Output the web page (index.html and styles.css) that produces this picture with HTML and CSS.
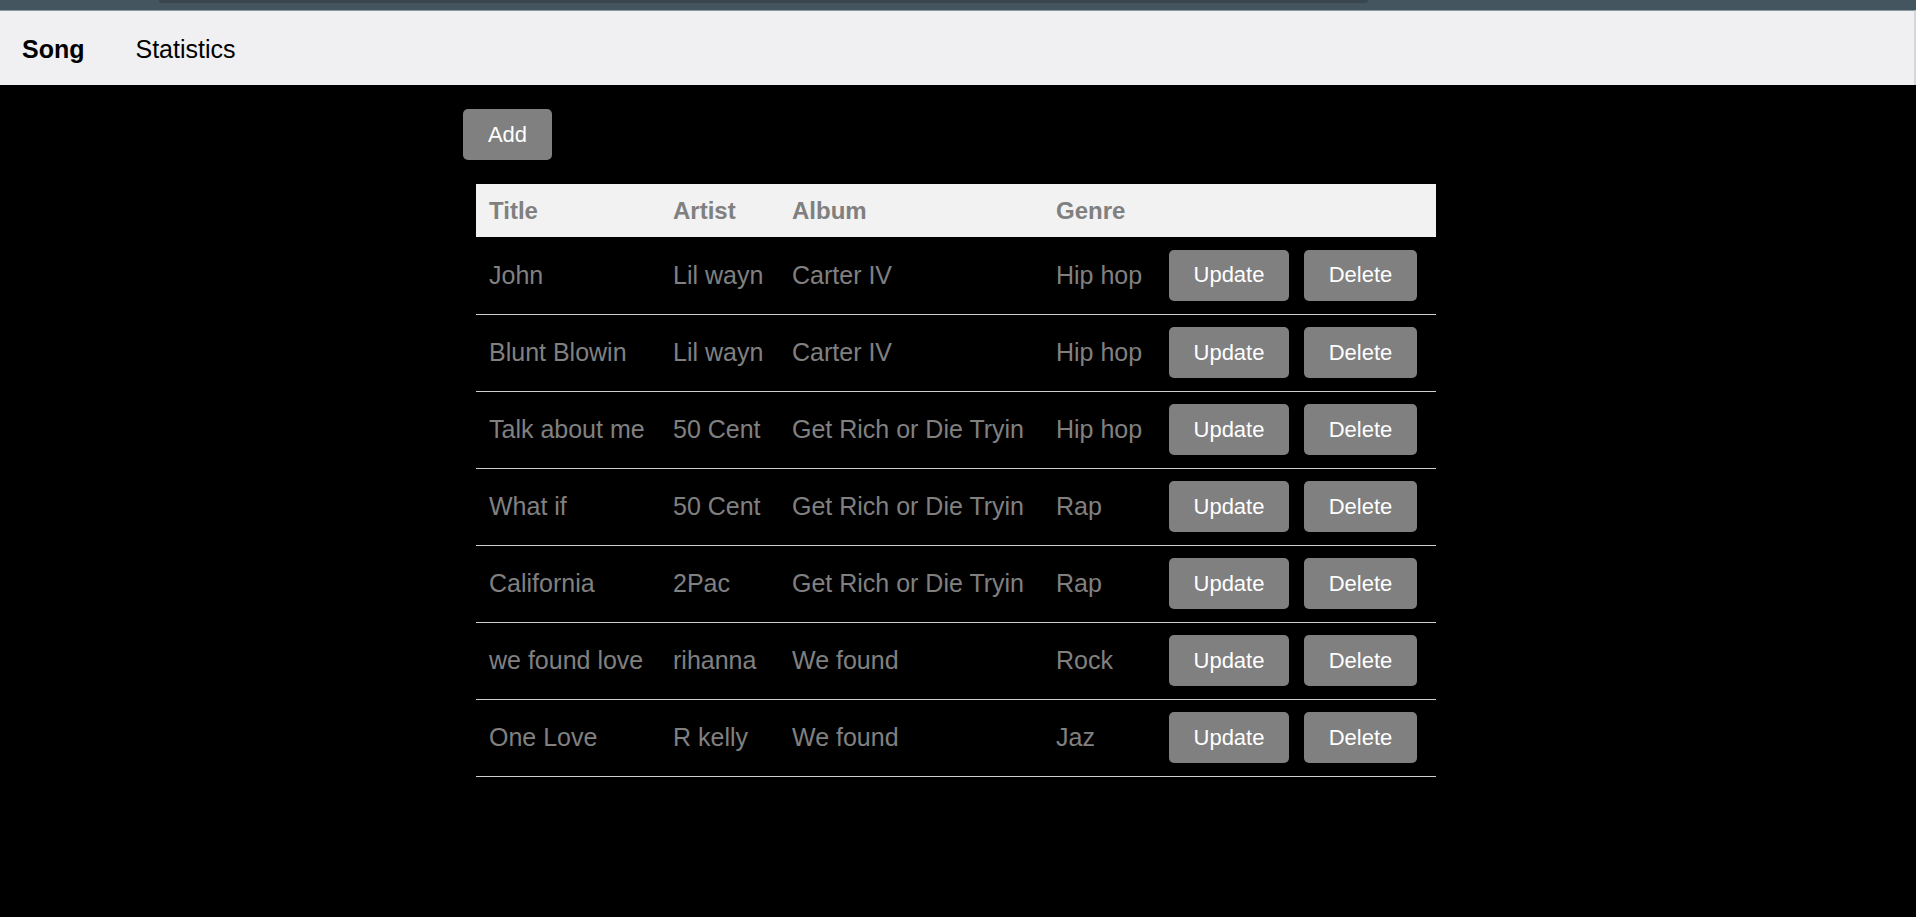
FILE: index.html
```html
<!DOCTYPE html>
<html lang="en">
<head>
<meta charset="utf-8">
<title>Songs</title>
<link rel="stylesheet" href="styles.css">
</head>
<body>
<div class="topstrip"><div class="tab-edge"></div></div>
<nav class="navbar">
  <a class="nav-link active">Song</a>
  <a class="nav-link">Statistics</a>
</nav>
<main class="content">
  <div class="toolbar"><button class="btn">Add</button></div>
  <table class="songs">
    <colgroup>
      <col class="c-title"><col class="c-artist"><col class="c-album"><col class="c-genre"><col class="c-actions">
    </colgroup>
    <thead>
      <tr><th>Title</th><th>Artist</th><th>Album</th><th>Genre</th><th></th></tr>
    </thead>
    <tbody>
      <tr><td>John</td><td>Lil wayn</td><td>Carter IV</td><td>Hip hop</td><td class="actions"><button class="btn">Update</button><button class="btn">Delete</button></td></tr>
      <tr><td>Blunt Blowin</td><td>Lil wayn</td><td>Carter IV</td><td>Hip hop</td><td class="actions"><button class="btn">Update</button><button class="btn">Delete</button></td></tr>
      <tr><td>Talk about me</td><td>50 Cent</td><td>Get Rich or Die Tryin</td><td>Hip hop</td><td class="actions"><button class="btn">Update</button><button class="btn">Delete</button></td></tr>
      <tr><td>What if</td><td>50 Cent</td><td>Get Rich or Die Tryin</td><td>Rap</td><td class="actions"><button class="btn">Update</button><button class="btn">Delete</button></td></tr>
      <tr><td>California</td><td>2Pac</td><td>Get Rich or Die Tryin</td><td>Rap</td><td class="actions"><button class="btn">Update</button><button class="btn">Delete</button></td></tr>
      <tr><td>we found love</td><td>rihanna</td><td>We found</td><td>Rock</td><td class="actions"><button class="btn">Update</button><button class="btn">Delete</button></td></tr>
      <tr><td>One Love</td><td>R kelly</td><td>We found</td><td>Jaz</td><td class="actions"><button class="btn">Update</button><button class="btn">Delete</button></td></tr>
    </tbody>
  </table>
</main>
</body>
</html>
```
FILE: styles.css
```css
* { box-sizing: border-box; }
html, body { margin: 0; padding: 0; }
body {
  background: #000;
  font-family: "Liberation Sans", Arial, sans-serif;
  min-height: 917px;
}
.topstrip {
  height: 10px;
  background: #45555f;
  display: flex;
}
.tab-edge {
  margin-left: 159px;
  width: 1209px;
  height: 3px;
  background: #3a464e;
  border-radius: 0 0 4px 4px;
}
.navbar {
  height: 75px;
  background: #f0f0f2;
  border-top: 1px solid #8a99a4;
  border-right: 2px solid #d6d6d8;
  display: flex;
  align-items: center;
  padding: 2px 0 0 22px;
  gap: 51px;
}
.nav-link {
  font-size: 25px;
  color: #000;
  text-decoration: none;
}
.nav-link.active { font-weight: bold; }
.content {
  width: 990px;
  margin: 0 auto;
  padding-top: 24px;
}
.toolbar { margin-bottom: 24px; }
.btn {
  font-family: "Liberation Sans", Arial, sans-serif;
  font-size: 22px;
  color: #fff;
  background: #808080;
  border: none;
  border-radius: 5px;
  height: 51px;
  padding: 0 24px;
  cursor: pointer;
}
.toolbar .btn { width: 89px; padding: 0; }
.songs {
  margin-left: 13px;
  width: 960px;
  border-collapse: collapse;
  table-layout: fixed;
}
.c-title { width: 184px; }
.c-artist { width: 119px; }
.c-album { width: 264px; }
.c-genre { width: 113px; }
.c-actions { width: 280px; }
.songs th {
  background: #f2f2f2;
  color: #808080;
  font-size: 24px;
  font-weight: bold;
  text-align: left;
  height: 53px;
  padding: 0 13px;
}
.songs td {
  color: #808080;
  font-size: 25px;
  height: 77px;
  padding: 0 13px;
  border-bottom: 1px solid #cfcfcf;
  white-space: nowrap;
}
.songs td.actions {
  padding-right: 0;
}
.actions .btn:first-child { width: 120px; padding: 0; margin-right: 15px; }
.actions .btn:last-child { width: 113px; padding: 0; }
```
